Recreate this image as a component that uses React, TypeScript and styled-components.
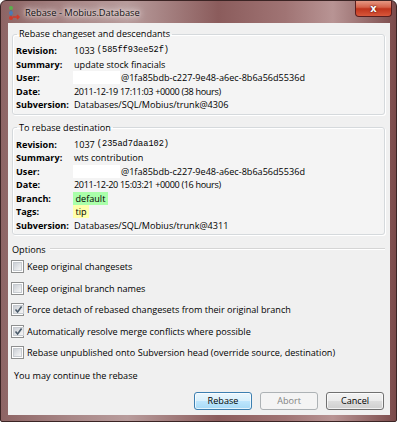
import React from 'react';
import styled, { createGlobalStyle } from 'styled-components';

const GlobalStyle = createGlobalStyle`
  html, body {
    margin: 0;
    padding: 0;
    background: #ffffff;
  }
  body {
    font-family: "Open Sans", "Liberation Sans", sans-serif;
    color: #000;
  }
`;

const FONT = '9.1px';

// Window chrome
const Window = styled.div`
  width: 397px;
  height: 422px;
  box-sizing: border-box;
  display: flex;
  flex-direction: column;
  border: 1px solid #3b2424;
  border-radius: 6px 6px 2px 2px;
  background: linear-gradient(to right, #8d6464 0%, #a98888 18%, #b89c9c 32%, #8b5c5c 55%, #a07474 72%, #b89494 84%, #7b4b4b 100%);
  overflow: hidden;
`;

const TitleBar = styled.div`
  height: 22px;
  display: flex;
  align-items: center;
  padding-left: 7px;
  flex-shrink: 0;
`;

const TitleText = styled.div`
  margin-left: 4px;
  font-size: 9.3px;
  color: #111;
  text-shadow: 0 0 6px #f4eaea, 0 0 3px #f4eaea, 0 0 10px #f4eaea;
  flex: 1;
`;

const CloseButton = styled.div`
  align-self: flex-start;
  width: 37px;
  height: 17px;
  margin-right: 4px;
  margin-top: -1px;
  box-sizing: border-box;
  border: 1px solid #5a1e1e;
  border-top: none;
  border-radius: 0 0 4px 4px;
  background: linear-gradient(to bottom, #e8a08c 0%, #d5624a 45%, #c0341c 55%, #d8573b 100%);
  display: flex;
  align-items: center;
  justify-content: center;
  color: #fff;
  font-family: "DejaVu Sans", sans-serif;
  font-weight: bold;
  font-size: 10px;
  text-shadow: 0 0 2px #5a1010, 0 0 1px #5a1010;
`;

const Body = styled.div`
  flex: 1;
  display: flex;
  padding: 0 6px 6px 7px;
`;

const Client = styled.div`
  flex: 1;
  background: #f0f0f0;
  display: flex;
  flex-direction: column;
  padding: 4px 5px 0 4px;
  font-size: ${FONT};
`;

// Group boxes
const Group = styled.fieldset<{ $gap?: number }>`
  margin: ${(p) => p.$gap ?? 0}px 0 0 0;
  padding: 3px 0 2px 3px;
  border: 1px solid #d5d9dc;
  border-radius: 3px;
  box-shadow: inset 1px 1px 0 #ffffff, 1px 1px 0 #ffffff;
  background: #f4f4f4;
  min-width: 0;
`;

const Legend = styled.legend`
  margin-left: 1px;
  padding: 0 2px;
  font-size: ${FONT};
  line-height: 14px;
`;

const InfoGrid = styled.div`
  display: grid;
  grid-template-columns: 58px auto;
  grid-auto-rows: 13.5px;
  align-items: center;
  line-height: 13px;
`;

const Label = styled.div`
  font-weight: bold;
`;

const Value = styled.div`
  white-space: nowrap;
  display: flex;
  align-items: center;
`;

const DateText = styled.span`
  letter-spacing: -0.35px;
`;

const Hash = styled.span`
  font-family: "Liberation Mono", "DejaVu Sans Mono", monospace;
  font-size: 8.6px;
  margin-left: 2px;
`;

const Redacted = styled.span`
  display: inline-block;
  width: 47px;
  height: 13px;
  background: #ffffff;
  margin-left: -1px;
  margin-right: 1px;
`;

const Tag = styled.span<{ $color: string }>`
  background: ${(p) => p.$color};
  padding: 0 2.5px;
  margin-left: -1px;
  line-height: 13px;
`;

// Options
const SectionHead = styled.div`
  display: flex;
  align-items: center;
  height: 14px;
  margin-top: 7px;
`;

const Rule = styled.div`
  flex: 1;
  margin-left: 4px;
  border-top: 1px solid #d5d5d5;
  border-bottom: 1px solid #ffffff;
`;

const CheckList = styled.div`
  display: flex;
  flex-direction: column;
`;

const CheckRow = styled.label`
  height: 21.5px;
  display: flex;
  align-items: center;
  gap: 3px;
  margin-left: -1px;
  white-space: nowrap;
`;

const Box = styled.span`
  width: 13px;
  height: 13px;
  box-sizing: border-box;
  border: 1px solid #8e8f8f;
  background: #ffffff;
  padding: 1px;
  display: flex;
  flex-shrink: 0;
`;

const BoxInner = styled.span`
  flex: 1;
  background: linear-gradient(135deg, #cbcfd5 0%, #f6f6f6 100%);
  border: 1px solid #c7cbd0;
  display: flex;
  align-items: center;
  justify-content: center;
`;

const Message = styled.div`
  margin-top: 5px;
  padding-left: 2px;
  line-height: 14px;
`;

const ButtonRow = styled.div`
  display: flex;
  justify-content: flex-end;
  gap: 8px;
  margin-top: 9px;
  padding-right: 1px;
`;

const Button = styled.div<{ $variant?: 'default' | 'disabled' }>`
  width: 58px;
  height: 18px;
  box-sizing: border-box;
  border-radius: 3px;
  display: flex;
  align-items: center;
  justify-content: center;
  font-size: ${FONT};
  border: 1px solid ${(p) => (p.$variant === 'default' ? '#3c7fb1' : p.$variant === 'disabled' ? '#adb2b5' : '#707070')};
  color: ${(p) => (p.$variant === 'disabled' ? '#838383' : '#000')};
  background: ${(p) =>
    p.$variant === 'default'
      ? 'linear-gradient(to bottom, #eaf6fd 0%, #d9f0fc 50%, #bee6fd 51%, #a7d9f5 100%)'
      : p.$variant === 'disabled'
      ? '#f4f4f4'
      : 'linear-gradient(to bottom, #f2f2f2 0%, #ebebeb 50%, #dddddd 51%, #cfcfcf 100%)'};
  box-shadow: inset 0 0 0 1px ${(p) => (p.$variant === 'disabled' ? 'transparent' : 'rgba(255,255,255,0.7)')};
`;

const AppIcon = () => (
  <svg width="13" height="15" viewBox="0 0 13 15">
    <line x1="3" y1="1" x2="3" y2="14" stroke="#5a6f8a" strokeWidth="1.5" />
    <circle cx="3" cy="3" r="2" fill="#5bb04a" />
    <circle cx="3" cy="8" r="2" fill="#4c7ab8" />
    <path d="M5 12 L11 12 M9 10 L11 12 L9 14" stroke="#d23a2a" strokeWidth="1.6" fill="none" />
    <circle cx="3" cy="13" r="2" fill="#d23a2a" />
  </svg>
);

const CheckMark = () => (
  <svg width="9" height="9" viewBox="0 0 9 9">
    <path d="M1.5 4.5 L3.6 7 L7.6 1.5" stroke="#4a5a6a" strokeWidth="1.6" fill="none" />
  </svg>
);

const Check: React.FC<{ checked?: boolean; children: React.ReactNode }> = ({ checked, children }) => (
  <CheckRow>
    <Box>
      <BoxInner>{checked && <CheckMark />}</BoxInner>
    </Box>
    <span>{children}</span>
  </CheckRow>
);

const source = [
  ['Revision:', <>1033<Hash>(585ff93ee52f)</Hash></>],
  ['Summary:', 'update stock finacials'],
  ['User:', <><Redacted />@1fa85bdb-c227-9e48-a6ec-8b6a56d5536d</>],
  ['Date:', <DateText>2011-12-19 17:11:03 +0000 (38 hours)</DateText>],
  ['Subversion:', 'Databases/SQL/Mobius/trunk@4306'],
] as const;

const dest = [
  ['Revision:', <>1037<Hash>(235ad7daa102)</Hash></>],
  ['Summary:', 'wts contribution'],
  ['User:', <><Redacted />@1fa85bdb-c227-9e48-a6ec-8b6a56d5536d</>],
  ['Date:', <DateText>2011-12-20 15:03:21 +0000 (16 hours)</DateText>],
  ['Branch:', <Tag $color="#aaffaa">default</Tag>],
  ['Tags:', <Tag $color="#ffffaa">tip</Tag>],
  ['Subversion:', 'Databases/SQL/Mobius/trunk@4311'],
] as const;

const InfoRows: React.FC<{ rows: readonly (readonly [string, React.ReactNode])[] }> = ({ rows }) => (
  <InfoGrid>
    {rows.map(([label, value]) => (
      <React.Fragment key={label}>
        <Label>{label}</Label>
        <Value>{value}</Value>
      </React.Fragment>
    ))}
  </InfoGrid>
);

export default function App() {
  return (
    <>
      <GlobalStyle />
      <Window>
        <TitleBar>
          <AppIcon />
          <TitleText>Rebase - Mobius.Database</TitleText>
          <CloseButton>x</CloseButton>
        </TitleBar>
        <Body>
          <Client>
            <Group>
              <Legend>Rebase changeset and descendants</Legend>
              <InfoRows rows={source} />
            </Group>
            <Group $gap={6}>
              <Legend>To rebase destination</Legend>
              <InfoRows rows={dest} />
            </Group>
            <SectionHead>
              Options
              <Rule />
            </SectionHead>
            <CheckList>
              <Check>Keep original changesets</Check>
              <Check>Keep original branch names</Check>
              <Check checked>Force detach of rebased changesets from their original branch</Check>
              <Check checked>Automatically resolve merge conflicts where possible</Check>
              <Check>Rebase unpublished onto Subversion head (override source, destination)</Check>
            </CheckList>
            <Message>You may continue the rebase</Message>
            <ButtonRow>
              <Button $variant="default">Rebase</Button>
              <Button $variant="disabled">Abort</Button>
              <Button>Cancel</Button>
            </ButtonRow>
          </Client>
        </Body>
      </Window>
    </>
  );
}
